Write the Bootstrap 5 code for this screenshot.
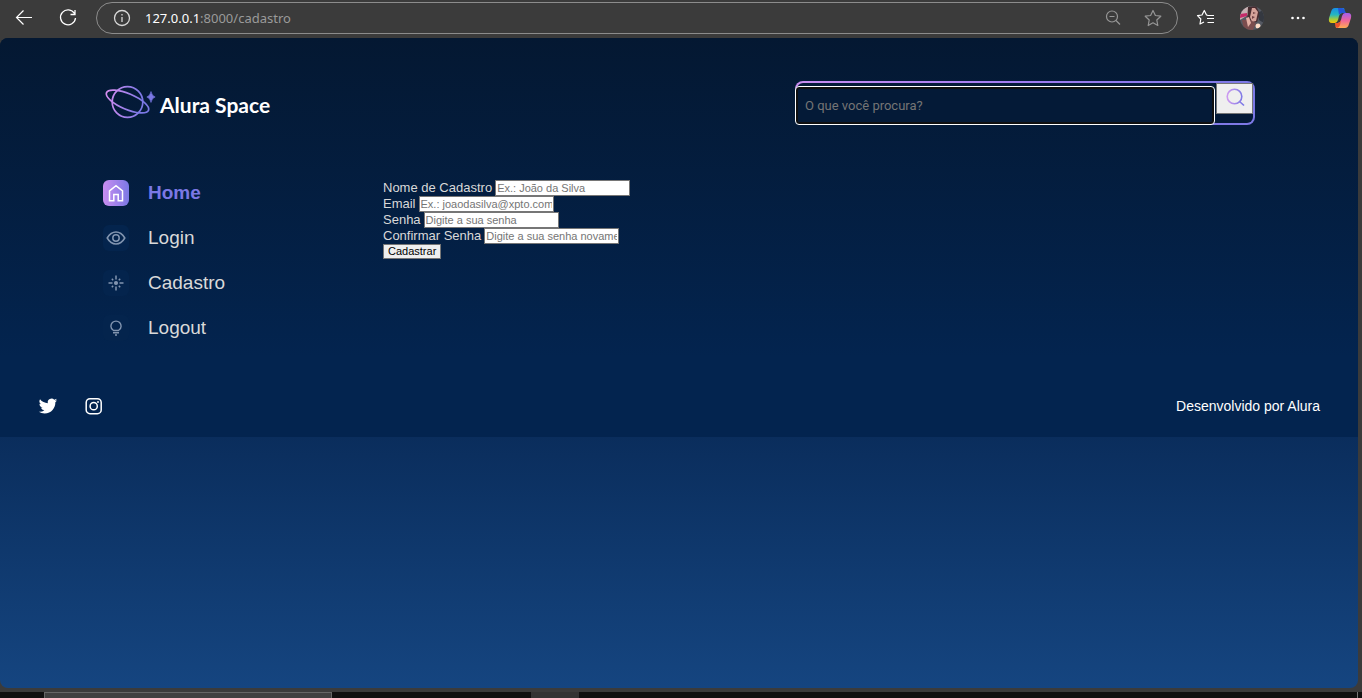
<!DOCTYPE html>
<html lang="pt-BR">
<head>
<meta charset="utf-8">
<meta name="viewport" content="width=device-width, initial-scale=1">
<title>Alura Space</title>
<link href="https://cdn.jsdelivr.net/npm/bootstrap@5.3.0/dist/css/bootstrap.min.css" rel="stylesheet">
<style>
body { background: #3b3b3b; font-family: "Liberation Sans", Arial, sans-serif; }
svg { display: block; flex-shrink: 0; }
button { border-radius: 0; }
.icon-btn { background: none; border: 0; padding: 0; color: #fff; }
/* browser bar */
.browser-bar { height: 38px; padding: 0 10px 2px 12px; }
.profile { margin: 0 22px; }
.copilot { margin-left: 18px; }
.address { height: 32px; margin: 0 16px; padding: 0 14px 0 15px; border: 1px solid #8c8c8c; border-radius: 16px; color: #9a9a9a; font: 13px "Noto Sans", sans-serif; }
.address-text { margin-left: 13px; }
.address b { color: #fff; font-weight: 400; }
.address-icon { color: #969696; }
/* site */
.site { margin: 0 4px 4px 0; border-radius: 8px; background: linear-gradient(#041832, #0a2d5c 61%, #154580); overflow: hidden; }
.site-content { background: linear-gradient(#041832, #03244f 80%); color: #d9d9d9; }
.site-header { padding: 43px 103px 0; }
.brand { color: #fff; font: 700 21px Lato, sans-serif; gap: 4px; }
.search { width: 460px; height: 44px; border: 2px solid transparent; border-radius: 8px; background: linear-gradient(#041a37, #041a37) padding-box, linear-gradient(90deg, #c98ef0, #a07cf0 50%, #7b78e5) border-box; }
.search-field { height: 39px; margin: 3px 1px 0 -2px; padding: 0 9px; border: 1px solid #fff; border-radius: 4px; outline: 0; background: #041a37; box-shadow: inset 0 0 0 2px #101010; color: #fff; font: 13px Roboto, sans-serif; min-width: 0; }
.search-field::placeholder { color: #757575; }
.search-btn { width: 37px; height: 31px; padding: 0 0 3px; border: 1px solid #767676; background: #efefef; }
.site-main { padding: 55px 103px 0; gap: 32px; }
.menu { width: 248px; gap: 19px; }
.menu a { gap: 19px; height: 26px; color: #d9d9d9; font-size: 19px; text-decoration: none; }
.menu a.current { color: #7b78e5; font-weight: 700; }
.tile { width: 26px; height: 26px; border-radius: 6px; background: #04244d; color: #8295b0; }
.current .tile { background: linear-gradient(90deg, #c98ef0, #7b78e5); color: #fff; }
.signup { font-size: 13px; line-height: 16px; }
.signup-row { gap: 3px; height: 16px; }
.signup input { width: 135px; height: 16px; padding: 0 1px; border: 1px solid #767676; background: #fff; font-size: 11px; line-height: 14px; }
.signup input::placeholder { color: #757575; }
.signup button { height: 15px; padding: 0 4px; border: 1px solid #767676; background: #efefef; color: #000; font-size: 11px; line-height: 13px; }
.site-footer { height: 62px; margin-top: 34px; padding: 0 38px; color: #fff; font-size: 14px; }
/* desktop strip */
.taskbar { height: 6px; background: #101010; padding: 0 4px 0 44px; }
.task-open { width: 288px; background: #404040; border: 1px solid #666; border-bottom: 0; }
.task-idle { width: 48px; margin-left: 199px; background: #333; }
.task-edge { width: 1px; background: #777; }
</style>
</head>
<body class="d-flex flex-column min-vh-100 m-0">
<div class="browser-bar d-flex align-items-center">
  <button class="icon-btn" aria-label="Voltar"><svg width="24" height="24" fill="none" stroke="currentColor" stroke-width="1.200"><path d="M20 11.500H4.500M11.500 4.500 4.500 11.500l7 7"/></svg></button>
  <button class="icon-btn ms-3 ps-1" aria-label="Atualizar"><svg width="24" height="24" fill="none" stroke="currentColor" stroke-width="1.300"><path d="M18.500 7.500A7.500 7.500 0 1 0 19.500 12M19 4v4.500h-4.500"/></svg></button>
  <div class="address d-flex align-items-center flex-grow-1">
    <svg width="20" height="20" fill="none" stroke="#d8d8d8" stroke-width="1.300"><circle cx="10" cy="10" r="7.500"/><path d="M10 9v5M10 6v1.600"/></svg>
    <span class="address-text flex-grow-1"><b>127.0.0.1</b>:8000/cadastro</span>
    <svg class="address-icon" width="20" height="20" fill="none" stroke="currentColor" stroke-width="1.200"><circle cx="9" cy="8.500" r="5.500"/><path d="M6.500 8.500h5M13 12.500l4 4"/></svg>
    <svg class="address-icon ms-3 ps-1" width="24" height="20" viewBox="0 0 20 20" fill="none" stroke="currentColor" stroke-width="1.200" stroke-linejoin="round"><path d="M10 2.500l2.400 5 5.400.7-4 3.800 1 5.500-4.800-2.700-4.800 2.700 1-5.500-4-3.800 5.400-.7z"/></svg>
  </div>
  <button class="icon-btn" aria-label="Favoritos"><svg width="24" height="24" fill="none" stroke="currentColor" stroke-width="1.200" stroke-linejoin="round"><path d="M14 9.300 12.500 9 10.300 4.500 8 9l-4.500.7L6.800 13l-.8 5 4-2M13.500 9.500h6.500M13 12.500h7M13.500 16.500h6.500"/></svg></button>
  <svg class="profile" width="24" height="24" role="img" aria-label="Perfil">
    <defs><clipPath id="face"><circle cx="12" cy="12" r="12"/></clipPath></defs>
    <g clip-path="url(#face)"><path fill="#555962" d="M0 0h24v24H0z"/><path fill="#c7b1b3" d="M0 3 9 0l-1 9-8 5z"/><path fill="#c42b69" d="M0 8l7-1v3l-7 2z"/><path fill="#472c30" d="M8 1l8-1 4 8-3 8-10 2z"/><path fill="#d5a29a" d="M12 2l3 0 3 4-2 9-4 1-2-5z"/><path fill="#714044" d="M13 6l3 1-3 1zM12 10l3 1-3 2z"/><path fill="#7b4d4e" d="M2 14l8 0 6 3-3 7H4z"/><path fill="#e3b0a5" d="M6 12l3-1 2 6-3 4z"/><path fill="#343840" d="M19 6l5-2v13l-5-3z"/><circle cx="18" cy="20" r="2.500" fill="#ffdcc8"/></g>
  </svg>
  <button class="icon-btn" aria-label="Mais opções"><svg width="24" height="24" fill="currentColor"><circle cx="6.500" cy="12" r="1.300"/><circle cx="12" cy="12" r="1.300"/><circle cx="17.500" cy="12" r="1.300"/></svg></button>
  <button class="icon-btn copilot" aria-label="Copilot"><svg width="24" height="24">
    <defs><linearGradient id="cp1" x2="0" y2="1"><stop stop-color="#168ee8"/><stop offset=".45" stop-color="#25b7c0"/><stop offset=".75" stop-color="#a4cb3d"/><stop offset="1" stop-color="#ffc400"/></linearGradient><linearGradient id="cp2" x2="0" y2="1"><stop stop-color="#a45dee"/><stop offset=".5" stop-color="#f0659a"/><stop offset="1" stop-color="#ffac52"/></linearGradient></defs>
    <path fill="url(#cp1)" d="M7 2h8q2 0 1.300 2.500L14 7q-2 0-3 3l-1 4q-1 3-3 3H4q-4 0-3-5l2-6q1-4 4-4z"/><path fill="#2356d7" d="M10 2h4q2 0 3 3l1 2h-4q-2 0-3 2z"/><path fill="url(#cp2)" d="M17 22H9q-2 0-1-3l2-2q2 0 3-3l1-4q1-3 3-3h3q4 0 3 5l-2 6q-1 4-4 4z"/><path fill="#ed542b" d="M7 17h3q2 0 3-3l-1 5q-1 3-3 3-2-1-2-5z"/>
  </svg></button>
</div>

<div class="site flex-grow-1">
  <div class="site-content">
    <header class="site-header d-flex justify-content-between">
      <a href="#" class="brand d-flex align-items-center align-self-start text-decoration-none">
        <svg width="53" height="42" fill="none" stroke-width="1.700">
          <defs><linearGradient id="planet" gradientUnits="userSpaceOnUse" x1="2" x2="48"><stop stop-color="#d68df0"/><stop offset=".8" stop-color="#7b78e5"/></linearGradient></defs>
          <circle cx="24.500" cy="21" r="15.300" stroke="url(#planet)"/><ellipse cx="24.500" cy="20.500" rx="22.800" ry="7.800" transform="rotate(23 24.500 20.500)" stroke="url(#planet)"/><path fill="#7b78e5" stroke="#7b78e5" stroke-width=".6" d="M48 10.500q.8 4.400 4.200 5.500-3.400 1-4.200 5.500-.8-4.500-4.200-5.500 3.400-1.100 4.200-5.500z"/>
        </svg>
        <span class="pt-1">Alura Space</span>
      </a>
      <form class="search d-flex align-items-start" role="search">
        <input class="search-field flex-grow-1" type="search" placeholder="O que você procura?" aria-label="O que você procura?">
        <button class="search-btn d-flex align-items-center justify-content-center" type="button" aria-label="Pesquisar"><svg width="22" height="22" fill="none" stroke-width="1.600"><defs><linearGradient id="lens" gradientUnits="userSpaceOnUse" x1="3" x2="19"><stop stop-color="#cf9bf1"/><stop offset="1" stop-color="#7b78e5"/></linearGradient></defs><circle cx="10.500" cy="10.500" r="7.300" stroke="url(#lens)"/><path d="M15.500 15.500l4.500 4" stroke="url(#lens)"/></svg></button>
      </form>
    </header>
    <main class="site-main d-flex">
      <nav class="menu d-flex flex-column" aria-label="Principal">
        <a href="#" class="current d-flex align-items-center"><span class="tile"><svg width="26" height="26" fill="none" stroke="currentColor" stroke-width="1.500"><path d="M6.500 20.700V10.800L13 5.600l6.500 5.200v9.900h-4.300v-6.200h-4.400v6.200z"/></svg></span>Home</a>
        <a href="#" class="d-flex align-items-center"><span class="tile"><svg width="26" height="26" fill="none" stroke="currentColor" stroke-width="1.500"><path d="M4.200 13q3.500-6 8.800-6t8.800 6q-3.500 6-8.800 6t-8.800-6z"/><circle cx="13" cy="13" r="3.200"/></svg></span>Login</a>
        <a href="#" class="d-flex align-items-center"><span class="tile"><svg width="26" height="26" fill="none" stroke="currentColor" stroke-width="1.500"><circle cx="13" cy="13" r="1.300" fill="currentColor"/><path d="M13 5.500V9.500M13 16.500v4M5.500 13h4M16.500 13h4M8.800 8.800l1.400 1.400M15.800 15.800l1.400 1.400M8.800 17.200l1.400-1.400M15.800 10.200l1.400-1.400"/></svg></span>Cadastro</a>
        <a href="#" class="d-flex align-items-center"><span class="tile"><svg width="26" height="26" fill="none" stroke="currentColor" stroke-width="1.400"><path d="M10.500 15.500q-2.600-1.600-2.600-4.300a5.100 5.100 0 0 1 10.200 0q0 2.700-2.600 4.300zM10 17.800h6M12 20h2"/></svg></span>Logout</a>
      </nav>
      <form class="signup">
        <div class="signup-row d-flex"><label for="nome">Nome de Cadastro</label><input id="nome" type="text" placeholder="Ex.: João da Silva"></div>
        <div class="signup-row d-flex"><label for="email">Email</label><input id="email" type="email" placeholder="Ex.: joaodasilva@xpto.com"></div>
        <div class="signup-row d-flex"><label for="senha">Senha</label><input id="senha" type="password" placeholder="Digite a sua senha"></div>
        <div class="signup-row d-flex"><label for="confirma">Confirmar Senha</label><input id="confirma" type="password" placeholder="Digite a sua senha novamente"></div>
        <button class="d-block" type="button">Cadastrar</button>
      </form>
    </main>
    <footer class="site-footer d-flex justify-content-between align-items-center">
      <div class="d-flex gap-4">
        <a href="#" class="text-white" aria-label="Twitter"><svg width="20" height="20" viewBox="-1 0 26 24" fill="currentColor"><path d="M23.950 4.570a10 10 0 0 1-2.830.780 4.960 4.960 0 0 0 2.170-2.730 9.900 9.900 0 0 1-3.130 1.190 4.920 4.920 0 0 0-8.380 4.480A13.900 13.900 0 0 1 1.640 3.160a4.920 4.920 0 0 0 1.520 6.570 4.900 4.900 0 0 1-2.230-.610v.060a4.920 4.920 0 0 0 3.950 4.830 5 5 0 0 1-2.210.080 4.940 4.940 0 0 0 4.600 3.420A9.870 9.870 0 0 1 0 19.540a13.900 13.900 0 0 0 7.550 2.210c9.050 0 14-7.500 14-13.980l-.020-.640a9.900 9.900 0 0 0 2.420-2.560z"/></svg></a>
        <a href="#" class="text-white" aria-label="Instagram"><svg width="24" height="20" viewBox="0 0 24 20" fill="none" stroke="currentColor" stroke-width="1.500"><rect x="4.200" y="2.700" width="15" height="15" rx="3.800"/><circle cx="11.700" cy="10.200" r="3.600"/><circle cx="16" cy="6" r=".7" fill="currentColor" stroke-width=".6"/></svg></a>
      </div>
      <span>Desenvolvido por Alura</span>
    </footer>
  </div>
</div>
<div class="taskbar d-flex"><div class="task-open"></div><div class="task-idle"></div><div class="task-edge ms-auto"></div></div>
<script src="https://cdn.jsdelivr.net/npm/bootstrap@5.3.0/dist/js/bootstrap.bundle.min.js"></script>
</body>
</html>
